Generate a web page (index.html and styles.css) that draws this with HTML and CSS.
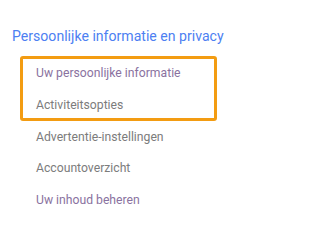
FILE: index.html
```html
<!DOCTYPE html>
<html lang="nl">
<head>
<meta charset="utf-8">
<title>Persoonlijke informatie en privacy</title>
<link rel="stylesheet" href="styles.css">
</head>
<body>
<nav class="section">
  <h2 class="heading">Persoonlijke informatie en privacy</h2>
  <ul class="list">
    <li class="highlight" aria-hidden="true"></li>
    <li class="item visited">Uw persoonlijke informatie</li>
    <li class="item">Activiteitsopties</li>
    <li class="item">Advertentie-instellingen</li>
    <li class="item">Accountoverzicht</li>
    <li class="item visited">Uw inhoud beheren</li>
  </ul>
</nav>
</body>
</html>
```
FILE: styles.css
```css
html, body {
  margin: 0;
  padding: 0;
  background: #ffffff;
}
body {
  font-family: Roboto, "Liberation Sans", Arial, sans-serif;
}
.section {
  padding: 26px 0 0 12px;
}
.heading {
  margin: 0;
  font-size: 14.1px;
  line-height: 20px;
  font-weight: 400;
  color: #4d7ff2;
  white-space: nowrap;
}
.list {
  position: relative;
  list-style: none;
  margin: 12px 0 0 0;
  padding: 0 0 0 24px;
}
.item {
  font-size: 12.2px;
  line-height: 31.8px;
  color: #7c7c7c;
  white-space: nowrap;
}
.item.visited {
  color: #8a72a0;
}
.highlight {
  position: absolute;
  top: -2px;
  left: 8px;
  width: 197px;
  height: 65px;
  box-sizing: border-box;
  border: 3px solid #f39c12;
  border-radius: 3px;
}
```
